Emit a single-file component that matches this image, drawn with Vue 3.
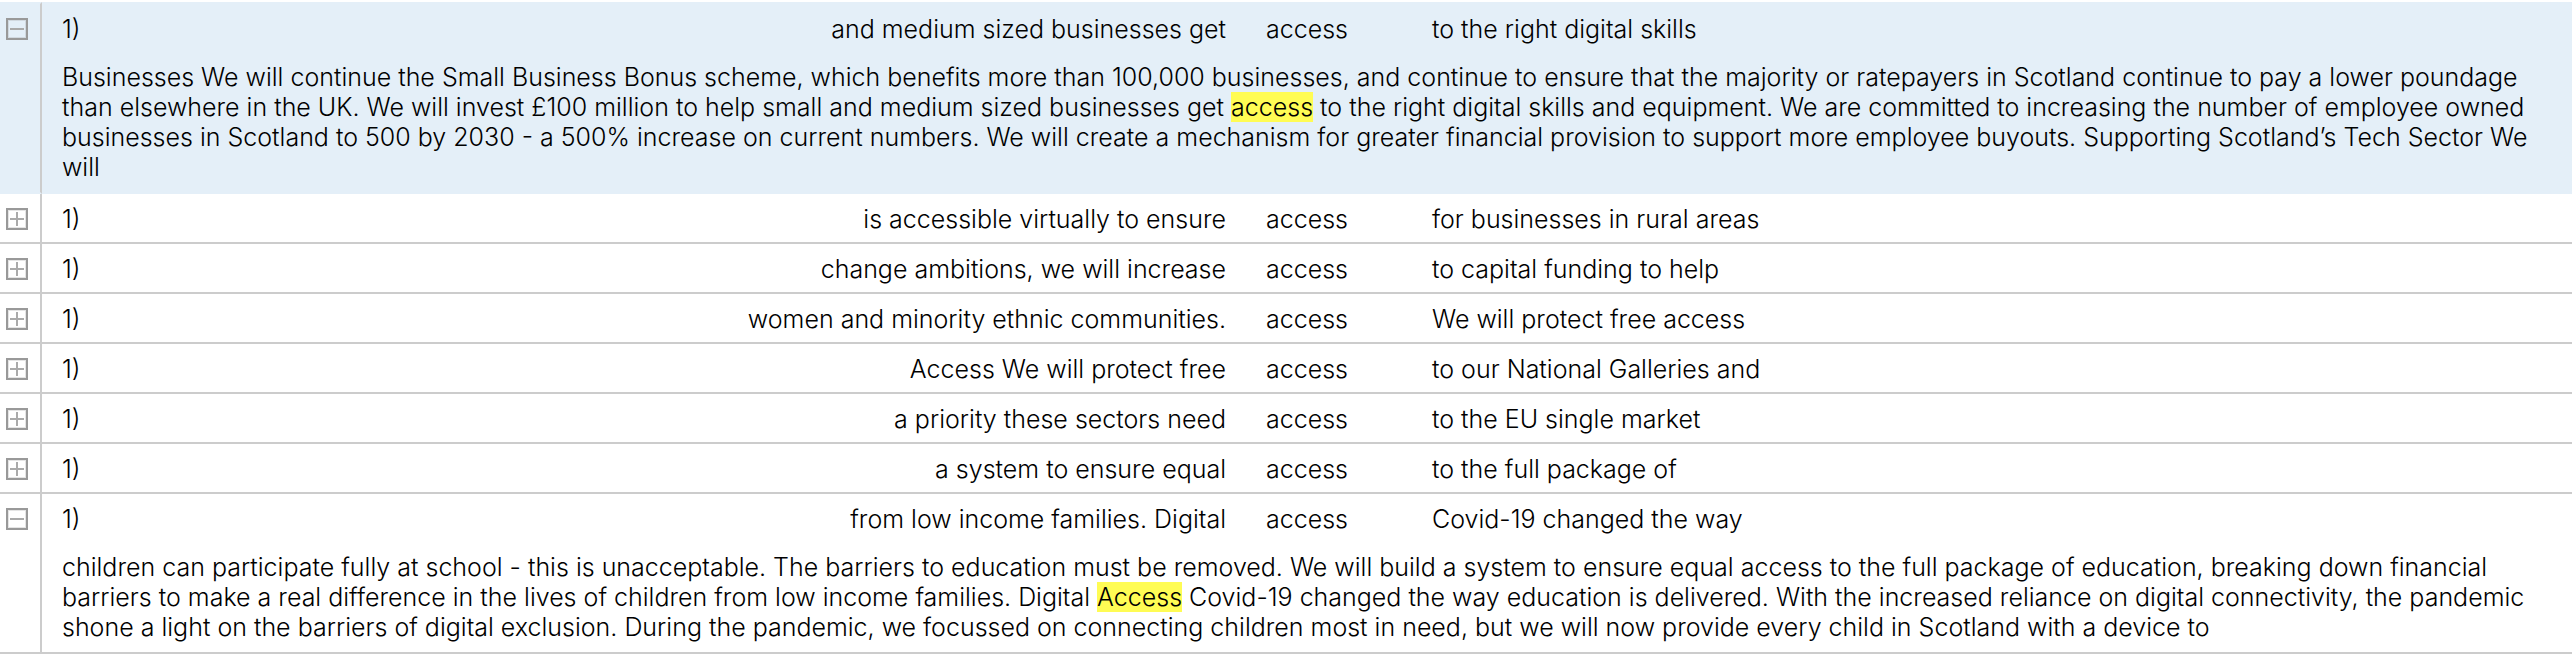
<script setup>
import { ref } from 'vue'

const rows = ref([
  {
    left: 'and medium sized businesses get',
    word: 'access',
    right: 'to the right digital skills',
    open: true,
    selected: true,
    detail: {
      before:
        'Businesses We will continue the Small Business Bonus scheme, which benefits more than 100,000 businesses, and continue to ensure that the majority or ratepayers in Scotland continue to pay a lower poundage than elsewhere in the UK. We will invest £100 million to help small and medium sized businesses get ',
      hit: 'access',
      after:
        ' to the right digital skills and equipment. We are committed to increasing the number of employee owned businesses in Scotland to 500 by 2030 - a 500% increase on current numbers. We will create a mechanism for greater financial provision to support more employee buyouts. Supporting Scotland’s Tech Sector We will',
    },
  },
  { left: 'is accessible virtually to ensure', word: 'access', right: 'for businesses in rural areas' },
  { left: 'change ambitions, we will increase', word: 'access', right: 'to capital funding to help' },
  { left: 'women and minority ethnic communities.', word: 'access', right: 'We will protect free access' },
  { left: 'Access We will protect free', word: 'access', right: 'to our National Galleries and' },
  { left: 'a priority these sectors need', word: 'access', right: 'to the EU single market' },
  { left: 'a system to ensure equal', word: 'access', right: 'to the full package of' },
  {
    left: 'from low income families. Digital',
    word: 'access',
    right: 'Covid-19 changed the way',
    open: true,
    detail: {
      before:
        'children can participate fully at school - this is unacceptable. The barriers to education must be removed. We will build a system to ensure equal access to the full package of education, breaking down financial barriers to make a real difference in the lives of children from low income families. Digital ',
      hit: 'Access',
      after:
        ' Covid-19 changed the way education is delivered. With the increased reliance on digital connectivity, the pandemic shone a light on the barriers of digital exclusion. During the pandemic, we focussed on connecting children most in need, but we will now provide every child in Scotland with a device to',
    },
  },
])
</script>

<template>
  <table class="concordance">
    <colgroup>
      <col class="col-toggle" />
      <col class="col-number" />
      <col />
      <col class="col-word" />
      <col />
    </colgroup>
    <tbody v-for="(row, i) in rows" :key="i" :class="{ selected: row.selected }">
      <tr class="line">
        <td class="toggle" :rowspan="row.open && row.detail ? 2 : 1">
          <button
            type="button"
            :aria-label="row.open ? 'Collapse' : 'Expand'"
            :aria-expanded="!!row.open"
            @click="row.open = !row.open"
          >
            <svg viewBox="0 0 22 22" aria-hidden="true">
              <rect class="inner" x="1" y="1" width="20" height="20" />
              <rect class="box" x="1" y="1" width="20" height="20" />
              <path class="sign" d="M4 11H18" />
              <path v-if="!row.open" class="sign" d="M11 4V18" />
            </svg>
          </button>
        </td>
        <td class="number">1)</td>
        <td class="left">{{ row.left }}</td>
        <td class="word">{{ row.word }}</td>
        <td class="right">{{ row.right }}</td>
      </tr>
      <tr v-if="row.open && row.detail">
        <td class="detail" colspan="4">
          {{ row.detail.before }}<mark>{{ row.detail.hit }}</mark>{{ row.detail.after }}
        </td>
      </tr>
    </tbody>
  </table>
</template>

<style>
body {
  background: #fff;
}
</style>

<style scoped>
.concordance {
  width: 100%;
  table-layout: fixed;
  border-collapse: separate;
  border-spacing: 0;
  border-top: 2px solid #fff;
  color: #000;
  font: 300 25px/30px Inter, "Liberation Sans", sans-serif;
}
.col-toggle {
  width: 42px;
}
.col-number {
  width: 44px;
}
.col-word {
  width: 166px;
}
td {
  padding: 10px 20px 8px;
  vertical-align: top;
  white-space: nowrap;
}
.toggle {
  padding: 14px 0 0 6px;
  border-right: 2px solid #ccc;
  border-bottom: 2px solid #ccc;
  line-height: 0;
}
.number {
  padding-right: 0;
}
.left {
  text-align: right;
}
.detail {
  padding: 10px 20px;
  white-space: normal;
  border-bottom: 2px solid #ccc;
}
.line:last-child td {
  border-bottom: 2px solid #ccc;
}
.selected {
  background: #e4eff8;
}
.selected .line td {
  border-top: 2px solid #e4eff8;
}
.selected .toggle,
.selected .detail,
.selected .line:last-child td {
  border-bottom-color: #e4eff8;
}
button {
  width: 22px;
  height: 22px;
  padding: 0;
  border: 0;
  background: none;
  cursor: pointer;
}
svg {
  display: block;
  width: 22px;
  height: 22px;
}
.inner {
  fill: none;
  stroke: #999;
  stroke-opacity: 0.25;
  stroke-width: 4;
}
.box {
  fill: none;
  stroke: #999;
  stroke-width: 2;
}
.sign {
  fill: none;
  stroke: #aaa;
  stroke-width: 2;
}
mark {
  display: inline-block;
  background: #fffc54;
  color: inherit;
}
</style>
